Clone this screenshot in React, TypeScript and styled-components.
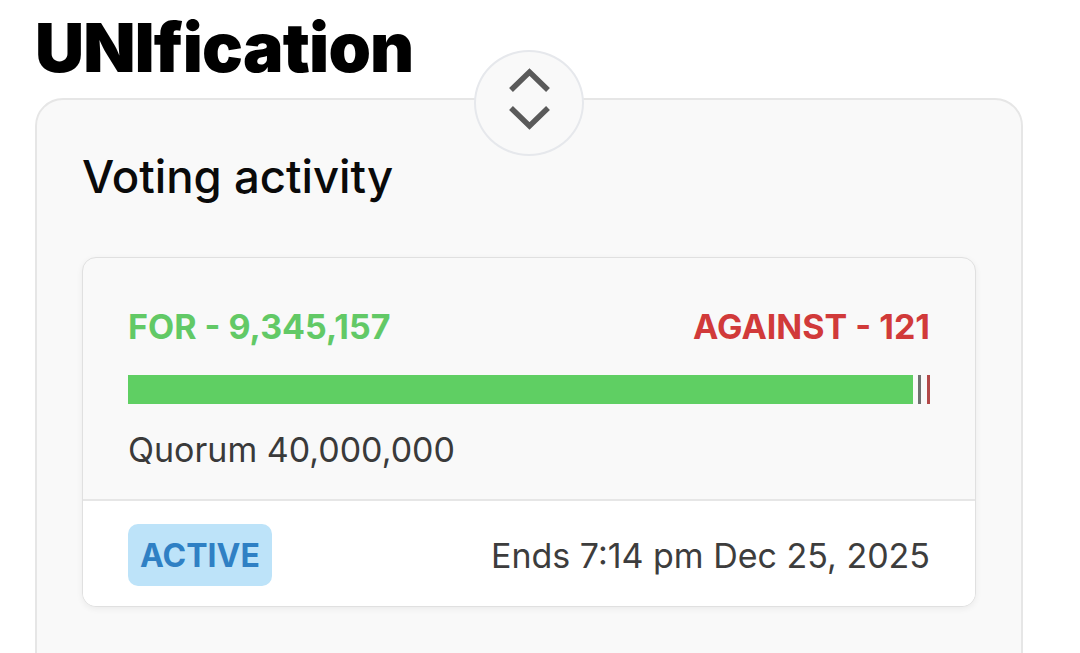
import React from "react";
import styled, { createGlobalStyle } from "styled-components";

const Global = createGlobalStyle`
  html, body { margin: 0; padding: 0; background: #ffffff; }
  body { font-family: Inter, "Noto Sans", sans-serif; -webkit-font-smoothing: antialiased; }
  * { box-sizing: border-box; }
`;

const Page = styled.div`
  padding: 0 57px 0 35px;
  height: 653px;
  overflow: hidden;
`;

const Title = styled.h1`
  margin: 0;
  padding-top: 6px;
  font-size: 68px;
  line-height: 82px;
  font-weight: 900;
  letter-spacing: -0.8px;
  color: #000;
`;

const OuterCard = styled.section`
  position: relative;
  margin-top: 10px;
  background: #f9f9f9;
  border: 2px solid #e6e6e6;
  border-radius: 28px;
  padding: 49px 45px 80px 45px;
`;

const ToggleButton = styled.button`
  position: absolute;
  top: -50px;
  left: 50%;
  transform: translateX(-50%);
  width: 110px;
  height: 106px;
  border-radius: 50%;
  background: #f9f9f9;
  border: 2px solid #e6e8ec;
  display: flex;
  align-items: center;
  justify-content: center;
  padding: 0;
  cursor: pointer;
`;

const Heading = styled.h2`
  margin: 0;
  font-size: 45.5px;
  line-height: 55px;
  font-weight: 500;
  color: #0a0a0a;
`;

const VoteCard = styled.div`
  margin-top: 53px;
  border: 1.5px solid #e0e0e0;
  border-radius: 14px;
  overflow: hidden;
  background: #f9f9f9;
  box-shadow: 0 2px 6px rgba(0, 0, 0, 0.06);
`;

const VoteBody = styled.div`
  padding: 48px 45px 29px 45px;
`;

const TallyRow = styled.div`
  display: flex;
  justify-content: space-between;
  align-items: baseline;
`;

const Tally = styled.span<{ $tone: "for" | "against" }>`
  font-size: 34px;
  line-height: 41px;
  font-weight: 700;
  color: ${(p) => (p.$tone === "for" ? "#62c966" : "#d13a3a")};
`;

const Bar = styled.div`
  margin-top: 28px;
  display: flex;
  align-items: stretch;
  height: 29px;
`;

const BarFill = styled.div`
  background: #5fcf63;
  height: 100%;
`;

const BarTick = styled.div<{ $color: "gray" | "red" }>`
  width: 3px;
  margin-left: ${(p) => (p.$color === "gray" ? "5px" : "6px")};
  background: ${(p) => (p.$color === "gray" ? "#707070" : "#b24848")};
`;

const Quorum = styled.div`
  margin-top: 25px;
  font-size: 34px;
  line-height: 41px;
  font-weight: 400;
  color: #3a3a3a;
`;

const Footer = styled.div`
  background: #ffffff;
  border-top: 2px solid #e6e6e6;
  padding: 23px 45px 20px 45px;
  display: flex;
  justify-content: space-between;
  align-items: center;
`;

const Badge = styled.span`
  display: inline-flex;
  align-items: center;
  height: 62px;
  padding: 0 12px;
  border-radius: 10px;
  background: #bde3f9;
  color: #2f80c4;
  font-size: 32px;
  font-weight: 700;
`;

const EndsText = styled.span`
  font-size: 34px;
  font-weight: 400;
  color: #3d3d3d;
`;

const ChevronIcon = () => (
  <svg width="60" height="80" viewBox="0 0 60 80" fill="none">
    <path d="M12 27 L30.5 9 L49 27" stroke="#5a5a5a" strokeWidth="5.5" strokeLinecap="butt" strokeLinejoin="miter" />
    <path d="M12 45 L30.5 63 L49 45" stroke="#5a5a5a" strokeWidth="5.5" strokeLinecap="butt" strokeLinejoin="miter" />
  </svg>
);

export default function App() {
  const forVotes = 9345157;
  return (
    <>
      <Global />
      <Page>
        <Title>UNIfication</Title>
        <OuterCard>
          <ToggleButton aria-label="toggle">
            <ChevronIcon />
          </ToggleButton>
          <Heading>Voting activity</Heading>
          <VoteCard>
            <VoteBody>
              <TallyRow>
                <Tally $tone="for">FOR - {forVotes.toLocaleString("en-US")}</Tally>
                <Tally $tone="against">AGAINST - 121</Tally>
              </TallyRow>
              <Bar>
                <BarFill style={{ flex: "1 1 0" }} />
                <BarTick $color="gray" />
                <BarTick $color="red" />
              </Bar>
              <Quorum>Quorum 40,000,000</Quorum>
            </VoteBody>
            <Footer>
              <Badge>ACTIVE</Badge>
              <EndsText>Ends 7:14 pm Dec 25, 2025</EndsText>
            </Footer>
          </VoteCard>
        </OuterCard>
      </Page>
    </>
  );
}
